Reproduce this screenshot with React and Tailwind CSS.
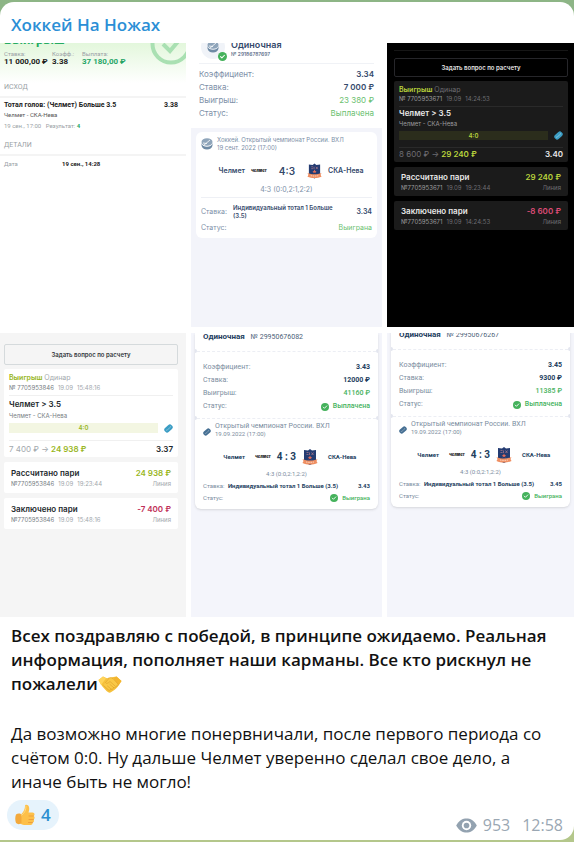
import React, { useState } from 'react';

const CheckBadge = ({ className }) => (
    <svg viewBox="0 0 16 16" className={className}>
        <circle cx="8" cy="8" r="8" fill="#45b25c" />
        <path d="M4.5 8.2l2.4 2.4 4.6-4.8" fill="none" stroke="#fff" strokeWidth="1.8" strokeLinecap="round" strokeLinejoin="round" />
    </svg>
);

// Шайба: наклонный диск с бликом
const Puck = ({ className }) => (
    <svg viewBox="0 0 20 20" className={className} fill="none">
        <g transform="rotate(-42 10 10)">
            <rect x="0" y="4" width="20" height="12" rx="5" fill="currentColor" />
            <path d="M3 9.5c4 2 10 2 14 0" stroke="#fff" strokeOpacity="0.55" strokeWidth="1.3" />
        </g>
    </svg>
);

const HockeyBall = ({ className }) => (
    <svg viewBox="0 0 24 24" className={className}>
        <ellipse cx="12" cy="8" rx="11" ry="7.5" fill="#8fa5ba" />
        <path d="M1 10c1 5 5 7.500 11 7.500s10-2.500 11-7.500v5c-1 5-5 8-11 8S2 20 1 15z" fill="#6f8ba5" />
        <path d="M5 15L18 4M4 10l8 1" stroke="#fff" strokeWidth="1.6" />
    </svg>
);

const SkaCrest = ({ className }) => (
    <svg viewBox="0 0 32 34" className={className}>
        <path d="M4 3l8 1 4-3 4 3 8-1v21c0 4-7 6-12 9-5-3-12-5-12-9z" fill="#243c72" />
        <path d="M9 8h4M9 12h4M15 8v5M19 8l4 5M23 8l-4 5" stroke="#c9848f" strokeWidth="1.2" />
        <path d="M16 14l1.500 3h3l-2.500 2 1 3-3-2-3 2 1-3-2.500-2h3z" fill="#e46b57" />
        <path d="M1 21c9 4 21 4 30 0l-2 4 2 4c-9 4-21 4-30 0l2-4z" fill="#ef8f62" />
        <path d="M8 27c5 1 11 1 16 0" stroke="#fff" strokeOpacity="0.8" strokeWidth="1.500" strokeDasharray="3 1.500" fill="none" />
    </svg>
);

const Handshake = () => (
    <svg viewBox="0 0 48 34" className="inline-block h-[17px] w-6 align-[-3px]" role="img" aria-label="рукопожатие">
        <path d="M1 8L10 1l9 4 6-2 12-2 10 9-8 12c-3 4-9 8-14 11-3 1-6-1-8-3L8 20z" fill="#f6c13c" />
        <path d="M1 8L10 1l6 4-10 13z" fill="#ffd45a" />
        <path d="M47 10L37 1l-6 3 10 15z" fill="#f3b52f" />
        <path d="M19 5c4-2 7-2 11 0l10 11c1 3-1 5-4 4 0 3-2 4-5 3 0 3-3 4-5 3-1 3-4 3-6 1l-9-8" fill="#f9c846" stroke="#d99a26" strokeWidth="1.100" strokeLinejoin="round" />
        <path d="M21 6l-6 7c1 3 5 2 9-2l10 9M24 17l7 6M19 20l7 6" fill="none" stroke="#d99a26" strokeWidth="1.100" strokeLinecap="round" />
    </svg>
);

const ThumbUp = () => (
    <svg viewBox="0 0 40 44" className="h-[22px] w-5" role="img" aria-label="палец вверх">
        <path d="M13 20C18 15 20 9 20 4c0-4 7-3 8 2 1 4 0 8-1 11h8c5 0 5 6 2 7 3 1 3 6 0 7 2 2 1 6-2 6 1 3-1 5-4 5H18c-3 0-5-2-8-3z" fill="#fdc04a" />
        <path d="M2 21c3-3 9-3 11 0v17c-3 3-8 3-11 0-2-5-2-12 0-17z" fill="#f3a93c" />
        <path d="M28 24h9M28 31h9M27 37h8" stroke="#e8963a" strokeWidth="1.500" strokeLinecap="round" />
        <path d="M14 22c5-4 8-10 8-17" fill="none" stroke="#ffd980" strokeWidth="2" strokeLinecap="round" />
    </svg>
);

const Eye = () => (
    <svg viewBox="0 0 22 16" className="h-[15px] w-[21px]" fill="none">
        <path d="M0 8C3 2.500 7 0.500 11 0.500S19 2.500 22 8c-3 5.500-7 7.500-11 7.500S3 13.500 0 8z" fill="#93a2b0" />
        <circle cx="11" cy="8" r="5" fill="#fff" />
        <circle cx="11" cy="8" r="3" fill="#93a2b0" />
    </svg>
);

const TeamMark = () => <span className="font-['Inter',sans-serif] text-[4px] font-black text-[#2d2d2d] italic">Челмет</span>;

const ReceiptTile = () => (
    <section className="relative overflow-hidden bg-white font-['Roboto',sans-serif] text-[7px] leading-2 text-[#9a9fa5]">
        <div className="flow-root h-10 bg-linear-to-b from-[#e3f7dc] to-white px-1">
            <h3 className="-mt-[11px] text-[13px] leading-4 font-bold text-[#26ab62]">Выигрыш</h3>
            <dl className="flex pt-0.5">
                <div className="w-12">
                    <dt className="text-[6px]">Ставка:</dt>
                    <dd className="text-[8px] font-bold text-[#222]">11 000,00 ₽</dd>
                </div>
                <div className="w-[30px]">
                    <dt className="text-[6px]">Коэфф.:</dt>
                    <dd className="text-[8px] font-bold text-[#222]">3.38</dd>
                </div>
                <div>
                    <dt className="text-[6px]">Выплата:</dt>
                    <dd className="text-[8px] font-bold text-[#26a567]">37 180,00 ₽</dd>
                </div>
            </dl>
        </div>
        <svg viewBox="0 0 42 42" className="absolute -top-5 -right-1.5 size-[42px]" fill="none" stroke="#a9e0b2" strokeWidth="4">
            <circle cx="21" cy="21" r="18.500" />
            <path d="M13 21l7 7 11-13" />
        </svg>
        <h4 className="px-1">ИСХОД</h4>
        <div className="mt-[5px] border-t-2 border-[#f4f4f4] px-1 pt-[3px]">
            <div className="flex justify-between pr-1 text-[7px] font-bold text-[#222]">
                <span>Тотал голов: (Челмет) Больше 3.5</span>
                <span>3.38</span>
            </div>
            <p className="mt-0.5 text-[6px] text-[#555]">Челмет - СКА-Нева</p>
            <p className="mt-[3px] text-[6px]">
                19 сен., 17:00 &nbsp; Результат: <b className="text-[#26a567]">4</b>
            </p>
        </div>
        <h4 className="mt-[11px] px-1">ДЕТАЛИ</h4>
        <div className="mt-[5px] flex border-t-2 border-[#f4f4f4] px-1 pt-1 text-[6px]">
            <span className="w-[58px]">Дата</span>
            <span className="font-bold text-[#222]">19 сен., 14:28</span>
        </div>
    </section>
);

const summary = [
    { label: 'Коэффициент:', value: '3.34', tone: 'font-semibold text-[#34496b]' },
    { label: 'Ставка:', value: '7 000 ₽', tone: 'font-semibold text-[#34496b]' },
    { label: 'Выигрыш:', value: '23 380 ₽', tone: 'text-[#6bbf70]' },
    { label: 'Статус:', value: 'Выплачена', tone: 'text-[#6bbf70]' },
];

const CouponTile = () => (
    <section className="overflow-hidden bg-[#f3f4fa] font-['Inter',sans-serif] text-[7px] leading-2 text-[#7d90a8]">
        <div className="bg-white px-2 pb-2">
            <div className="flex h-5 gap-1.5">
                <div className="relative -mt-2 ml-0.5 flex size-6 items-center justify-center rounded-full bg-[#f0f3f8]">
                    <HockeyBall className="size-3" />
                    <CheckBadge className="absolute -right-0.5 -bottom-0.5 size-[9px]" />
                </div>
                <div className="-mt-1">
                    <h3 className="text-[9px] leading-3 font-semibold text-[#34496b]">Одиночная</h3>
                    <p className="text-[5px] leading-[6px] font-medium text-[#4d6180]">№ 29186787697</p>
                </div>
            </div>
            <dl className="border-t border-[#f0f2f6] pt-1 text-[8px] leading-[13px]">
                {summary.map(({ label, value, tone }) => (
                    <div key={label} className="flex justify-between">
                        <dt>{label}</dt>
                        <dd className={tone}>{value}</dd>
                    </div>
                ))}
            </dl>
        </div>
        <div className="mx-[5px] mt-1 rounded-md bg-white px-[5px] pt-1 pb-1.5">
            <div className="flex gap-1 text-[6px]">
                <HockeyBall className="mt-0.5 size-3" />
                <p>
                    Хоккей. Открытый чемпионат России. ВХЛ
                    <br />
                    19 сент. 2022 (17:00)
                </p>
            </div>
            <div className="mt-[11px] flex items-center justify-center gap-1.5 text-[7px] font-semibold text-[#34496b]">
                <span className="flex-1 text-right">Челмет</span>
                <TeamMark />
                <span className="px-1.5 text-[10px] leading-4">4:3</span>
                <SkaCrest className="h-4 w-[15px]" />
                <span className="flex-1">СКА-Нева</span>
            </div>
            <p className="mt-[7px] text-center">4:3 (0:0,2:1,2:2)</p>
            <div className="mt-[3px] flex items-center border-t border-[#eef0f5] pt-1.5">
                <span className="w-8">Ставка:</span>
                <b className="flex-1 text-[6px] leading-2 font-semibold text-[#34496b]">
                    Индивидуальный тотал 1 Больше
                    <br />
                    (3.5)
                </b>
                <b className="font-semibold text-[#34496b]">3.34</b>
            </div>
            <div className="mt-1 flex justify-between">
                <span>Статус:</span>
                <span className="text-[#6bbf70]">Выиграна</span>
            </div>
        </div>
    </section>
);

const themes = {
    dark: {
        tile: 'bg-black text-[#6d6d72] pt-[7px] pr-1.5 pl-[7px]',
        rule: 'h-2 border-[#161616]',
        button: 'h-[19px] border-[#26262a] text-[#e6e6e6]',
        card: 'bg-[#1b1b1b]',
        strong: 'text-[#e9e9e9]',
        dim: 'text-[#9b9b9e]',
        win: 'text-[#b9d33c]',
        loss: 'text-[#dc4c75]',
        line: 'border-[#2a2a2a]',
        number: 'mt-px',
        title: 'mt-[3px] pt-0.5',
        sub: 'mt-[3px]',
        bar: 'h-[9px] bg-[#2b2d1c]',
        total: 'pt-0.5',
        entry: 'pt-1.5 pb-1',
    },
    light: {
        tile: 'bg-[#f5f5f5] text-[#a2a8ad] pt-[3px] pr-2 pl-1',
        rule: 'h-2 border-transparent',
        button: 'h-[21px] border-[#d5dadc] text-[#33383c]',
        card: 'bg-white',
        strong: 'text-[#22282c]',
        dim: 'text-[#767c82]',
        win: 'text-[#98b61d]',
        loss: 'text-[#bf2f59]',
        line: 'border-[#f0f0f0]',
        number: 'mt-0.5',
        title: 'mt-[3px] pt-1',
        sub: 'mt-1',
        bar: 'h-2.5 bg-[#f3f6e2]',
        total: 'pt-1',
        entry: 'pt-[7px] pb-[5px]',
    },
};

const BetTile = ({ theme, number, time, score, stake, win, odds, entries }) => {
    const t = themes[theme];
    return (
        <section className={`overflow-hidden font-['Inter',sans-serif] text-[6px] leading-2 ${t.tile}`}>
            <div className={`border-t ${t.rule}`} />
            <button type="button" className={`block w-full rounded-xs border text-[6px] font-semibold ${t.button}`}>
                Задать вопрос по расчету
            </button>
            <div className="mt-1 flex flex-col gap-[5px]">
                <div className={`rounded-xs px-[5px] pt-[5px] pb-1 ${t.card}`}>
                    <p className="text-[7px]">
                        <b className={`font-semibold ${t.win}`}>Выигрыш</b> Одинар
                    </p>
                    <p className={`flex gap-1 ${t.number}`}>
                        <span className={t.dim}>№ {number}</span>
                        <span>19.09</span>
                        <span>{time}</span>
                    </p>
                    <h3 className={`border-t text-[8px] font-semibold ${t.title} ${t.line} ${t.strong}`}>Челмет &gt; 3.5</h3>
                    <p className={`${t.sub} ${t.dim}`}>Челмет - СКА-Нева</p>
                    <div className="mt-[3px] flex items-center gap-1.5">
                        <div className={`flex flex-1 items-center justify-center font-semibold ${t.bar} ${t.win}`}>{score}</div>
                        <Puck className="size-[9px] text-[#3b9dc4]" />
                    </div>
                    <div className={`mt-[7px] flex justify-between border-t text-[8px] ${t.total} ${t.line}`}>
                        <span>
                            {stake} ₽ → <b className={`font-semibold ${t.win}`}>{win} ₽</b>
                        </span>
                        <b className={`font-semibold ${t.strong}`}>{odds}</b>
                    </div>
                </div>
                {entries.map((entry) => (
                    <div key={entry.title} className={`rounded-xs px-[7px] ${t.card} ${t.entry}`}>
                        <div className="flex justify-between text-[8px] font-semibold">
                            <span className={t.strong}>{entry.title}</span>
                            <span className={entry.positive ? t.win : t.loss}>{entry.amount} ₽</span>
                        </div>
                        <div className="mt-[3px] flex gap-1">
                            <span className={t.dim}>№{number}</span>
                            <span>19.09</span>
                            <span className="flex-1">{entry.time}</span>
                            <span>Линия</span>
                        </div>
                    </div>
                ))}
            </div>
        </section>
    );
};

// Перфорированная линия отрыва с вырезами по краям
const TearLine = () => (
    <div className="-mx-2 flex h-1 items-center justify-between">
        <span className="h-1 w-0.5 rounded-r-full bg-[#e3e6ef]" />
        <span className="flex-1 border-t border-dashed border-[#eceef4]" />
        <span className="h-1 w-0.5 rounded-l-full bg-[#e3e6ef]" />
    </div>
);

const SingleTile = ({ number, odds, stake, win, lift }) => (
    <section className="overflow-hidden bg-[#f4f5fb] px-1 font-['Roboto',sans-serif] text-[7px] leading-2 text-[#7b8da0]">
        <div className={`rounded-b-md bg-white px-2 pb-[7px] shadow-sm ${lift ? '-mt-0.5' : ''}`}>
            <h3 className="flex gap-1.5 pb-2">
                <b className="text-[8px] font-bold text-[#23405e]">Одиночная</b>
                <span className="text-[#4c6178]">№ {number}</span>
            </h3>
            <TearLine />
            <dl className="pt-2 pb-[3px] text-[7px] leading-[13px]">
                <div className="flex justify-between">
                    <dt>Коэффициент:</dt>
                    <dd className="font-bold text-[#23405e]">{odds}</dd>
                </div>
                <div className="flex justify-between">
                    <dt>Ставка:</dt>
                    <dd className="font-bold text-[#23405e]">{stake} ₽</dd>
                </div>
                <div className="flex justify-between">
                    <dt>Выигрыш:</dt>
                    <dd className="font-medium text-[#45b25c]">{win} ₽</dd>
                </div>
                <div className="flex justify-between">
                    <dt>Статус:</dt>
                    <dd className="flex items-center gap-1 font-medium text-[#45b25c]">
                        <CheckBadge className="size-2" />
                        Выплачена
                    </dd>
                </div>
            </dl>
            <TearLine />
            <div className="flex gap-1 pt-0.5">
                <Puck className="mt-1.5 size-2 text-[#456f93]" />
                <p>
                    Открытый чемпионат России. ВХЛ
                    <br />
                    <span className="text-[6px]">19.09.2022 (17:00)</span>
                </p>
            </div>
            <div className="mt-2.5 flex items-center gap-1.5 text-[6px] font-bold text-[#23405e]">
                <span className="flex-1 pr-1 text-right">Челмет</span>
                <TeamMark />
                <span className="text-[10px] leading-[18px]">4 : 3</span>
                <SkaCrest className="h-[18px] w-4" />
                <span className="flex-1 pl-1">СКА-Нева</span>
            </div>
            <p className="mt-1 text-center text-[6px]">4:3 (0:0,2:1,2:2)</p>
            <div className="mt-1 flex justify-between text-[6px]">
                <span>
                    Ставка: <b className="ml-0.5 text-[#23405e]">Индивидуальный тотал 1 Больше (3.5)</b>
                </span>
                <b className="text-[#23405e]">{odds}</b>
            </div>
            <div className="mt-1 flex justify-between text-[6px]">
                <span>Статус:</span>
                <span className="flex items-center gap-1 font-medium text-[#45b25c]">
                    <CheckBadge className="size-2" />
                    Выиграна
                </span>
            </div>
        </div>
    </section>
);

const App = () => {
    const [liked, setLiked] = useState(false);

    return (
        <main className="min-h-screen bg-linear-to-b from-[#8db586] to-[#b4c78b] py-0.5 font-['Open_Sans','Noto_Sans',sans-serif]">
            <article className="overflow-hidden rounded-tl-[14px] rounded-r-[14px] bg-white">
                <header className="flex h-[41px] items-center px-[11px] pt-1">
                    <h1 className="text-[17px] leading-6 font-semibold">
                        <a href="#" className="text-[#2b8fd6]">
                            Хоккей На Ножах
                        </a>
                    </h1>
                </header>

                <div className="grid auto-rows-[284px] grid-cols-[186fr_191fr_187fr] gap-x-[5px] gap-y-1.5">
                    <ReceiptTile />
                    <CouponTile />
                    <BetTile
                        theme="dark"
                        number="7705953671"
                        time="14:24:53"
                        score="4:0"
                        stake="8 600"
                        win="29 240"
                        odds="3.40"
                        entries={[
                            { title: 'Рассчитано пари', amount: '29 240', time: '19:23:44', positive: true },
                            { title: 'Заключено пари', amount: '-8 600', time: '14:24:53' },
                        ]}
                    />
                    <BetTile
                        theme="light"
                        number="7705953846"
                        time="15:48:16"
                        score="4:0"
                        stake="7 400"
                        win="24 938"
                        odds="3.37"
                        entries={[
                            { title: 'Рассчитано пари', amount: '24 938', time: '19:23:44', positive: true },
                            { title: 'Заключено пари', amount: '-7 400', time: '15:48:16' },
                        ]}
                    />
                    <SingleTile number="29950676082" odds="3.43" stake="12000" win="41160" />
                    <SingleTile number="29950676267" odds="3.45" stake="9300" win="11385" lift />
                </div>

                <div className="px-[11px] pt-[7px] text-[17px] leading-6 text-[#111]">
                    <p className="font-semibold">
                        Всех поздравляю с победой, в принципе ожидаемо. Реальная информация, пополняет наши карманы. Все кто рискнул не
                        пожалели
                        <Handshake />
                    </p>
                    <p className="mt-6.5">
                        Да возможно многие понервничали, после первого периода со счётом 0:0. Ну дальше Челмет уверенно сделал свое дело, а
                        иначе быть не могло!
                    </p>
                </div>

                <footer className="mt-1.5 flex items-start justify-between pr-[11px] pb-[5px] pl-[7px]">
                    <button
                        type="button"
                        aria-pressed={liked}
                        onClick={() => setLiked(!liked)}
                        className="flex h-[30px] items-center gap-1.5 rounded-full bg-[#e6f3fc] px-2 text-[17px] font-semibold text-[#2b8fd0]"
                    >
                        <ThumbUp />
                        {liked ? 5 : 4}
                    </button>
                    <div className="mt-[15px] flex items-center gap-1.5 text-[16px] leading-5 text-[#9aa7b3]">
                        <Eye />
                        <span>953</span>
                        <time className="ml-1.5">12:58</time>
                    </div>
                </footer>
            </article>
        </main>
    );
};

export default App;
